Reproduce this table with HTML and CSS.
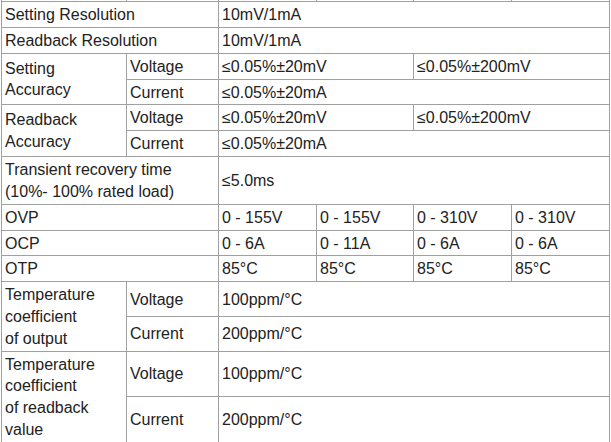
FILE: index.html
```html
<!DOCTYPE html>
<html>
<head>
<meta charset="utf-8">
<link rel="stylesheet" href="styles.css">
</head>
<body>
<table class="spec">
  <colgroup>
    <col class="c1"><col class="c2"><col class="c3"><col class="c4"><col class="c5"><col class="c6">
  </colgroup>
  <tr class="cut"><td></td><td></td><td></td><td></td><td></td><td></td></tr>
  <tr><td colspan="2">Setting Resolution</td><td colspan="4">10mV/1mA</td></tr>
  <tr><td colspan="2">Readback Resolution</td><td colspan="4">10mV/1mA</td></tr>
  <tr><td rowspan="2">Setting<br>Accuracy</td><td>Voltage</td><td colspan="2">≤0.05%±20mV</td><td colspan="2">≤0.05%±200mV</td></tr>
  <tr><td>Current</td><td colspan="4">≤0.05%±20mA</td></tr>
  <tr><td rowspan="2">Readback<br>Accuracy</td><td>Voltage</td><td colspan="2">≤0.05%±20mV</td><td colspan="2">≤0.05%±200mV</td></tr>
  <tr><td>Current</td><td colspan="4">≤0.05%±20mA</td></tr>
  <tr><td colspan="2">Transient recovery time<br>(10%- 100% rated load)</td><td colspan="4">≤5.0ms</td></tr>
  <tr><td colspan="2">OVP</td><td>0 - 155V</td><td>0 - 155V</td><td>0 - 310V</td><td>0 - 310V</td></tr>
  <tr><td colspan="2">OCP</td><td>0 - 6A</td><td>0 - 11A</td><td>0 - 6A</td><td>0 - 6A</td></tr>
  <tr><td colspan="2">OTP</td><td>85°C</td><td>85°C</td><td>85°C</td><td>85°C</td></tr>
  <tr><td rowspan="2">Temperature<br>coefficient<br>of output</td><td>Voltage</td><td colspan="4">100ppm/°C</td></tr>
  <tr><td>Current</td><td colspan="4">200ppm/°C</td></tr>
  <tr><td rowspan="2">Temperature<br>coefficient<br>of readback<br>value</td><td>Voltage</td><td colspan="4">100ppm/°C</td></tr>
  <tr><td>Current</td><td colspan="4">200ppm/°C</td></tr>
</table>
</body>
</html>
```

FILE: styles.css
```css
html, body {
  margin: 0;
  padding: 0;
  background: #fff;
}
body {
  font-family: "Liberation Sans", Arial, sans-serif;
  font-size: 16px;
  color: #222;
}
.spec {
  border-collapse: collapse;
  table-layout: fixed;
  width: 609px;
  margin-left: 1px;
}
.c1 { width: 125px; }
.c2 { width: 92px; }
.c3 { width: 98px; }
.c4 { width: 97px; }
.c5 { width: 98px; }
.c6 { width: 98px; }
.spec td {
  border: 1px solid #a0a0a0;
  padding: 2px 3px 1.1px 3px;
  line-height: 21.75px;
  vertical-align: middle;
  text-align: left;
}
.spec .cut td {
  border-top: none;
  height: 1px;
  padding: 0;
  line-height: 0;
}
```
